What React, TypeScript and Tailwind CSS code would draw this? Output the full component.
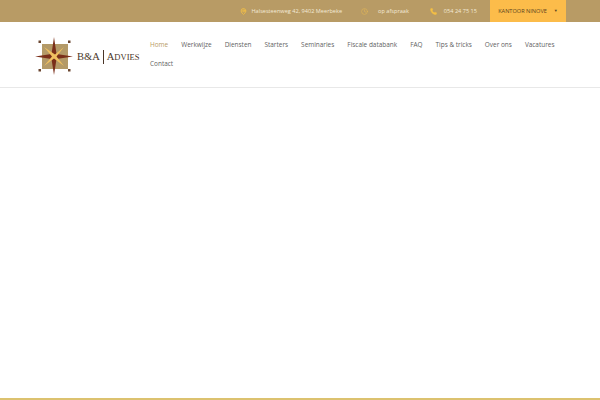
import { MapPin, Clock, Phone } from "lucide-react";

const nav = ["Werkwijze", "Diensten", "Starters", "Seminaries", "Fiscale databank", "FAQ", "Tips & tricks", "Over ons", "Vacatures"];

function Logo() {
  return (
    <div className="flex items-center h-[40px]">
      <svg width="40" height="40" viewBox="0 0 40 40" className="shrink-0">
        <rect x="7" y="7" width="26" height="25" fill="#b49a68" />
        <rect x="3.500" y="3.500" width="2.500" height="2.500" fill="#6b4630" />
        <rect x="33" y="3.500" width="2.500" height="2.500" fill="#6b4630" />
        <rect x="3.500" y="32" width="2.500" height="2.500" fill="#6b4630" />
        <rect x="33" y="32" width="2.500" height="2.500" fill="#6b4630" />
        <path d="M19 0 L21.500 17 L38 19.500 L21.500 22 L19 38 L16.500 22 L0 19.500 L16.500 17 Z" fill="#7a2f1a" />
        <path d="M9 10 L20 17.500 L29 10 L21.500 19.500 L29 29 L19 21.500 L9 29 L17 19.500 Z" fill="#f0c060" />
      </svg>
      <div className="ml-[2px] flex items-center font-['Liberation_Serif',serif] text-[#4a3528] leading-none whitespace-nowrap">
        <span className="text-[10.5px]">B&amp;A</span>
        <span className="mx-[3px] w-px h-[14px] bg-[#4a3528]" />
        <span className="text-[10.5px]">A<span className="text-[8.5px]">DVIES</span></span>
      </div>
    </div>
  );
}

export default function App() {
  return (
    <div className="w-[600px] h-[400px] flex flex-col bg-white font-['Open_Sans',sans-serif] overflow-hidden">
      <div className="h-[22px] shrink-0 bg-[#b89b65] flex justify-end pr-[34px] text-[5.6px] text-[#f3ead7]">
        <div className="flex items-center gap-[5px] mr-[19px]">
          <MapPin size={7} className="text-[#f5c045]" strokeWidth={3} />
          <span>Halsesteenweg 42, 9402 Meerbeke</span>
        </div>
        <div className="flex items-center gap-[10px] mr-[21px]">
          <Clock size={7} className="text-[#e3b757]" />
          <span>op afspraak</span>
        </div>
        <div className="flex items-center gap-[7px] mr-[13px]">
          <Phone size={7} className="text-[#f5c045]" fill="#f5c045" />
          <span>054 24 75 15</span>
        </div>
        <div className="w-[76px] bg-[#fcbc4a] flex items-center justify-center gap-[7px] text-[#5b4520]">
          <span>KANTOOR NINOVE</span>
          <span className="text-[4px]">▼</span>
        </div>
      </div>
      <div className="h-[66px] shrink-0 flex items-start border-b border-[#e8e8e8]">
        <div className="ml-[35px] mt-[15px] mr-[11px] w-[104px] shrink-0">
          <Logo />
        </div>
        <nav className="flex flex-wrap w-[416px] text-[6.45px] text-[#5f5f5f] leading-[19px] pt-[13px] gap-x-[13px]">
          <a className="text-[#b89b65]">Home</a>
          {nav.map((n) => (
            <a key={n}>{n}</a>
          ))}
          <a>Contact</a>
        </nav>
      </div>
      <div className="flex-1 bg-white" />
      <div className="h-[2px] shrink-0 bg-[#dcc26f]" />
    </div>
  );
}
